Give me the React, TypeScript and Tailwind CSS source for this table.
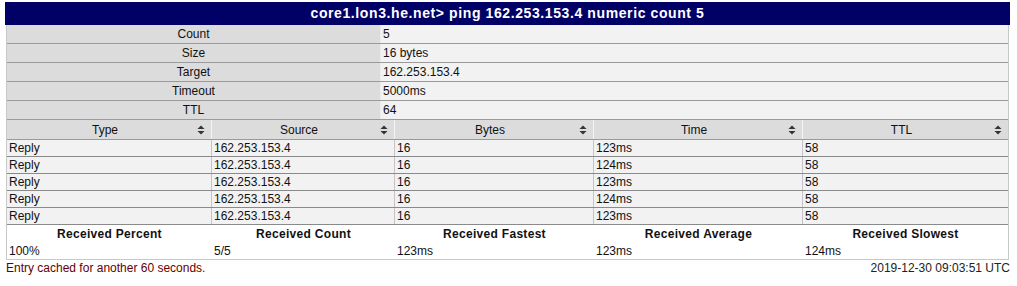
import React from "react";

const info = [
  ["Count", "5"],
  ["Size", "16 bytes"],
  ["Target", "162.253.153.4"],
  ["Timeout", "5000ms"],
  ["TTL", "64"],
];

const columns = ["Type", "Source", "Bytes", "Time", "TTL"];

const replies = [
  ["Reply", "162.253.153.4", "16", "123ms", "58"],
  ["Reply", "162.253.153.4", "16", "124ms", "58"],
  ["Reply", "162.253.153.4", "16", "123ms", "58"],
  ["Reply", "162.253.153.4", "16", "124ms", "58"],
  ["Reply", "162.253.153.4", "16", "123ms", "58"],
];

const summary = [
  ["Received Percent", "100%"],
  ["Received Count", "5/5"],
  ["Received Fastest", "123ms"],
  ["Received Average", "123ms"],
  ["Received Slowest", "124ms"],
];

const grid = "grid grid-cols-[205px_183px_199px_209px_205px]";

function SortIcon() {
  return (
    <svg width="8" height="10" viewBox="0 0 8 10" className="shrink-0">
      <path d="M4 0.5 L7.5 4 L0.5 4 Z" fill="#333" />
      <path d="M0.5 6 L7.5 6 L4 9.5 Z" fill="#333" />
    </svg>
  );
}

export default function App() {
  return (
    <div className="ml-[5px] mt-[2px] w-[1005px] font-['Liberation_Sans',Arial,sans-serif] text-[12px] text-[#111]">
      {/* Title */}
      <div className="h-[23px] bg-[#000066] text-white font-bold text-[14px] tracking-[0.6px] leading-[23px] text-center">
        core1.lon3.he.net&gt; ping 162.253.153.4 numeric count 5
      </div>

      <div className="mx-[1px] w-[1003px] border-x border-[#c8c8c8]">
        {/* Query parameters */}
        {info.map(([label, value]) => (
          <div key={label} className="grid grid-cols-[374px_1fr] h-[19px] border-b border-[#9a9a9a] leading-[17px]">
            <div className="bg-[#dcdcdc] text-center pt-[1px] border-r border-[#ececec]">{label}</div>
            <div className="bg-[#f2f2f2] pl-[2px] pt-[1px]">{value}</div>
          </div>
        ))}

        {/* Column headers */}
        <div className={`${grid} h-[20px] bg-[#dcdcdc] border-b border-[#9a9a9a]`}>
          {columns.map((c, i) => (
            <div
              key={c}
              className={`flex items-center pl-[6px] pr-[6px] pt-[1px] ${i < 4 ? "border-r border-[#f4f4f4]" : ""}`}
            >
              <span className="flex-1 text-center">{c}</span>
              <SortIcon />
            </div>
          ))}
        </div>

        {/* Replies */}
        {replies.map((row, r) => (
          <div key={r} className={`${grid} h-[17px] bg-[#f2f2f2] border-b border-[#8a8a8a] leading-[15px]`}>
            {row.map((cell, i) => (
              <div key={i} className={`pl-[2px] pt-[1px] ${i < 4 ? "border-r border-[#c4c4c4]" : ""}`}>
                {cell}
              </div>
            ))}
          </div>
        ))}

        {/* Summary */}
        <div className="bg-white border-b border-[#c8c8c8]">
          <div className={`${grid} h-[18px] leading-[17px] pt-[1px] font-bold tracking-[0.3px]`}>
            {summary.map(([h]) => (
              <div key={h} className="text-center">{h}</div>
            ))}
          </div>
          <div className={`${grid} h-[16px] leading-[16px]`}>
            {summary.map(([h, v]) => (
              <div key={h} className="pl-[2px]">{v}</div>
            ))}
          </div>
        </div>
      </div>

      {/* Footer */}
      <div className="flex justify-between pl-[1px] h-[17px] leading-[17px]">
        <span className="text-[#660000]">Entry cached for another 60 seconds.</span>
        <span className="text-[#222]">2019-12-30 09:03:51 UTC</span>
      </div>
    </div>
  );
}
